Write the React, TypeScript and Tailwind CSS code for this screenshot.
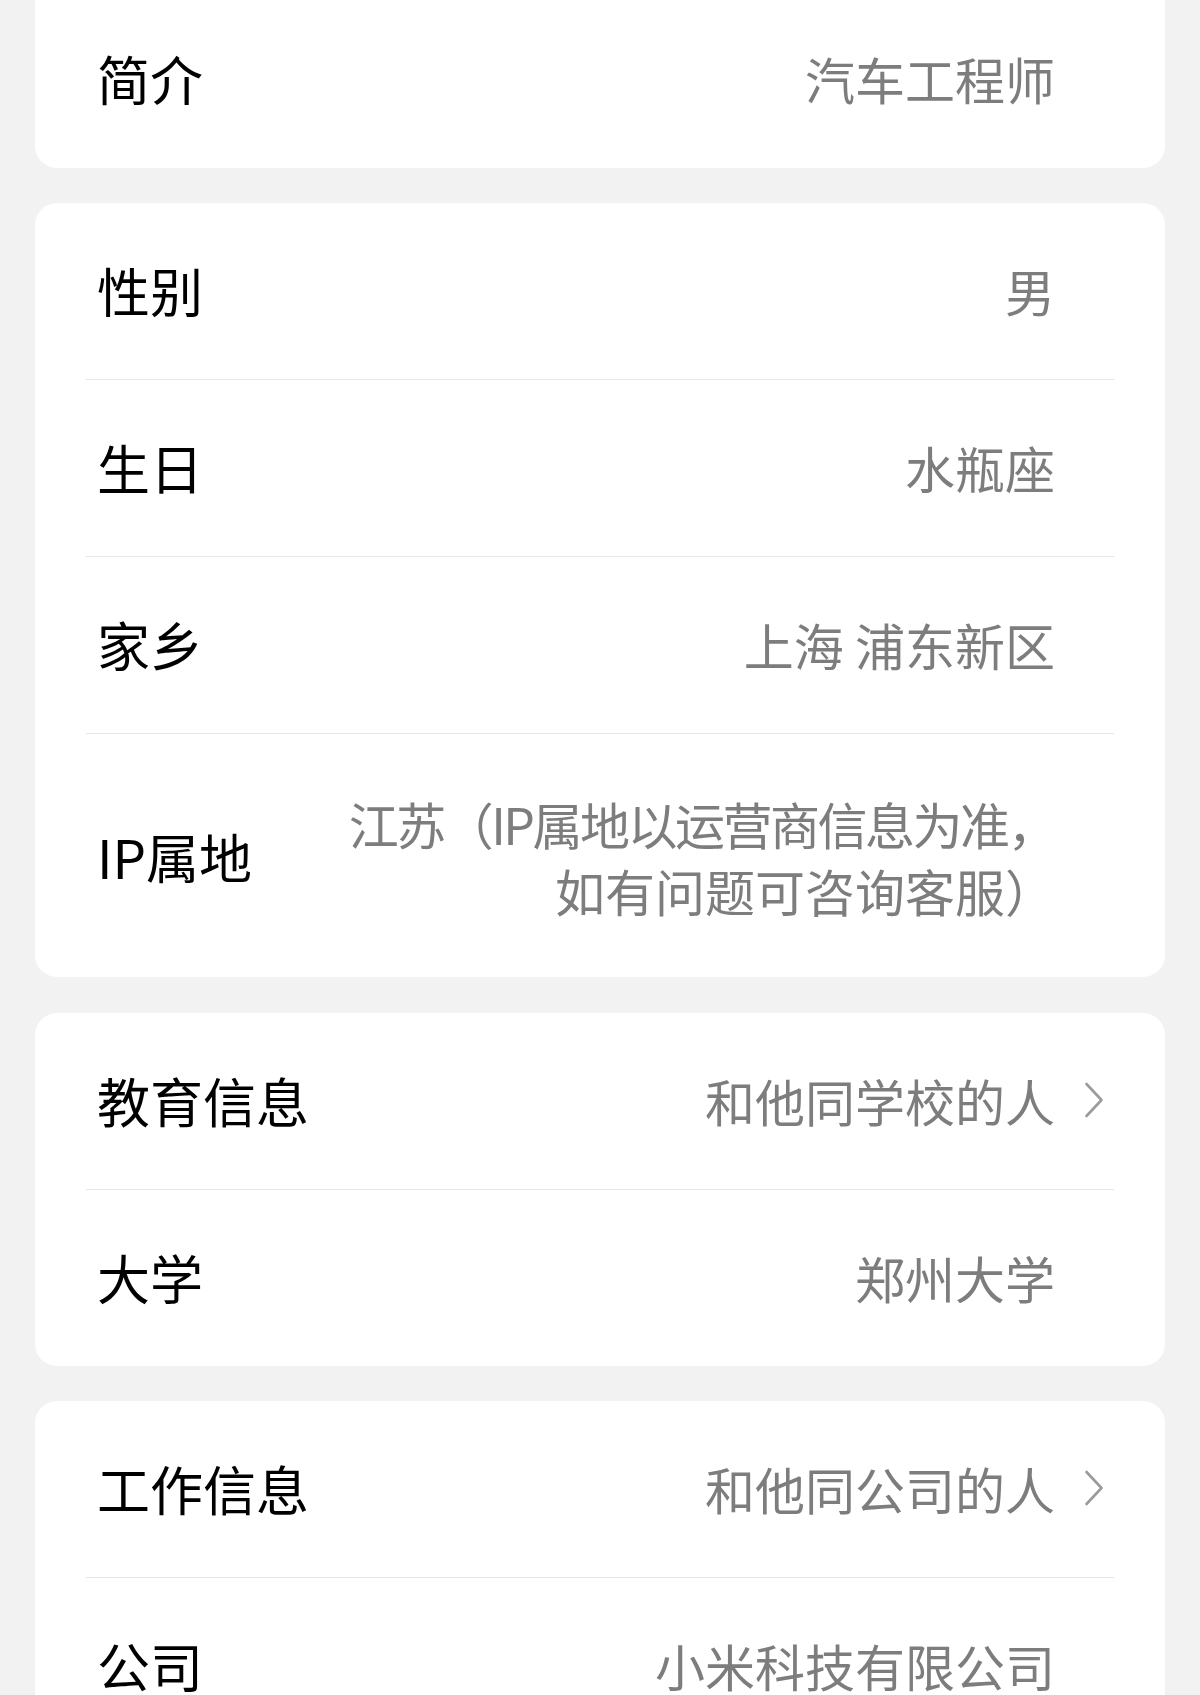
import React from "react";

const FONT = { fontFamily: '"Noto Sans CJK SC", "Noto Sans", sans-serif' };

function Chevron() {
  return (
    <svg width="20" height="36" viewBox="0 0 20 36" fill="none">
      <polyline points="2.5,2 17.5,18 2.5,34" stroke="#9b9b9b" strokeWidth="2.6" strokeLinecap="round" strokeLinejoin="round" />
    </svg>
  );
}

type RowProps = {
  label: string;
  value: React.ReactNode;
  arrow?: boolean;
  divider?: boolean;
};

function Row({ label, value, arrow, divider }: RowProps) {
  return (
    <div className={divider ? "mx-[51px] border-t border-[#e7e7e7]" : "mx-[51px]"}>
      <div className="flex h-[176px] items-center pb-[2px] pl-[11px] pr-[10px]">
        <div className="shrink-0 text-[53px] leading-none text-black">{label}</div>
        <div className="flex-1 text-right text-[50px] leading-none text-[#7d7d7d]">{value}</div>
        <div className="ml-[29px] flex w-[20px] shrink-0 items-center justify-center">
          {arrow ? <Chevron /> : null}
        </div>
      </div>
    </div>
  );
}

export default function App() {
  return (
    <div className="h-[1695px] overflow-hidden bg-[#f2f2f2] px-[35px]" style={FONT}>
      <div className="rounded-b-[22px] bg-white">
        <div className="mx-[51px]">
          <div className="flex h-[168px] items-center pb-[12px] pl-[11px] pr-[10px]">
            <div className="shrink-0 text-[53px] leading-none text-black">简介</div>
            <div className="flex-1 text-right text-[50px] leading-none text-[#7d7d7d]">汽车工程师</div>
            <div className="ml-[29px] w-[20px] shrink-0" />
          </div>
        </div>
      </div>

      <div className="mt-[35px] rounded-[22px] bg-white">
        <Row label="性别" value="男" />
        <Row label="生日" value="水瓶座" divider />
        <Row label="家乡" value="上海 浦东新区" divider />
        <div className="mx-[51px] border-t border-[#e7e7e7]">
          <div className="flex h-[243px] items-center pl-[11px] pr-[10px] pt-[2px]">
            <div className="shrink-0 text-[53px] leading-none text-black">IP属地</div>
            <div className="flex-1 text-right text-[50px] leading-[67px] text-[#7d7d7d]">
              <div className="tracking-[-2.5px]">江苏（IP属地以运营商信息为准，</div>
              <div>如有问题可咨询客服）</div>
            </div>
            <div className="ml-[29px] w-[20px] shrink-0" />
          </div>
        </div>
      </div>

      <div className="mt-[36px] rounded-[22px] bg-white">
        <Row label="教育信息" value="和他同学校的人" arrow />
        <Row label="大学" value="郑州大学" divider />
      </div>

      <div className="mt-[35px] rounded-[22px] bg-white">
        <Row label="工作信息" value="和他同公司的人" arrow />
        <Row label="公司" value="小米科技有限公司" divider />
      </div>
    </div>
  );
}
